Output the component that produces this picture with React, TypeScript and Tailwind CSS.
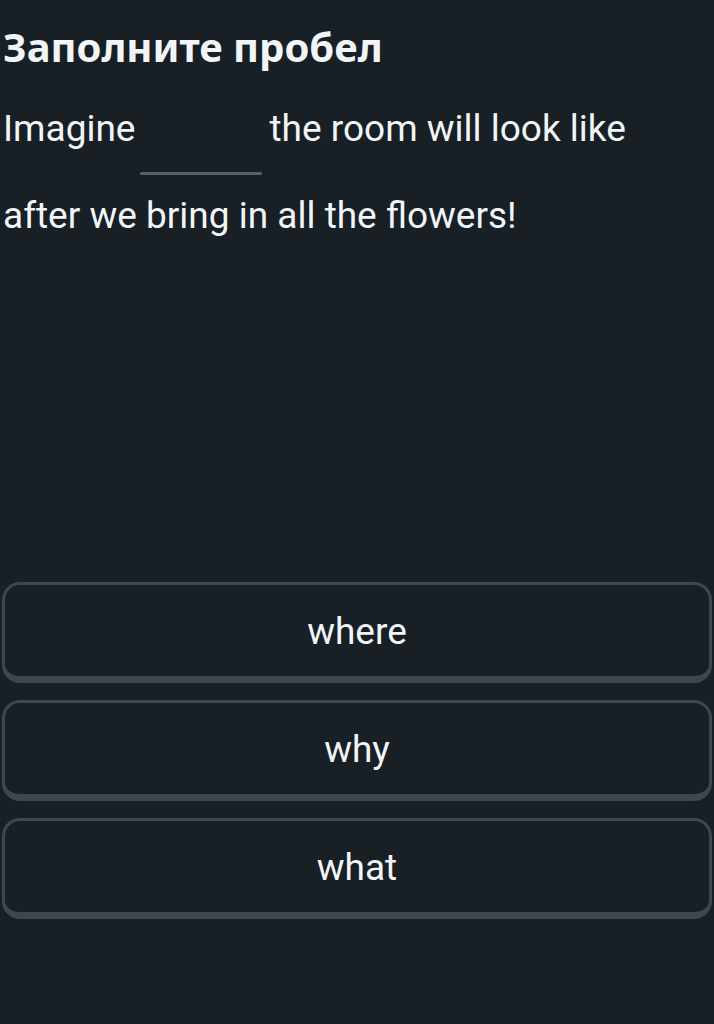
import React from "react";

function Option({ label }: { label: string }) {
  return (
    <button className="w-full h-[101px] rounded-[18px] border-[3px] border-b-[7px] border-[#3c474f] bg-[#182026] flex items-center justify-center text-[37px] text-[#f1f5f7] leading-none">
      <span className="mt-[1px]">{label}</span>
    </button>
  );
}

export default function App() {
  return (
    <div
      className="w-[714px] h-[1024px] bg-[#182026] text-[#f1f5f7] overflow-hidden"
      style={{ fontFamily: "Roboto, 'Noto Sans', sans-serif" }}
    >
      <div className="pl-[3px] pt-[24px]">
        <h1 className="text-[40px] font-bold leading-[46px]" style={{ fontFamily: "'Noto Sans', sans-serif" }}>
          Заполните пробел
        </h1>
      </div>
      <div className="pl-[3px] pt-[37px]">
        <div className="flex items-start text-[37px] leading-[44px]">
          <span>Imagine</span>
          <div className="ml-[5px] mr-[7px] w-[122px] h-[68px] flex items-end">
            <div className="w-full h-[3px] rounded-full bg-[#5a6268]" />
          </div>
          <span>the room will look like</span>
        </div>
        <div className="text-[37px] leading-[44px] mt-[19px]">after we bring in all the flowers!</div>
      </div>
      <div className="px-[2px] mt-[344px] flex flex-col gap-[17px]">
        <Option label="where" />
        <Option label="why" />
        <Option label="what" />
      </div>
    </div>
  );
}
